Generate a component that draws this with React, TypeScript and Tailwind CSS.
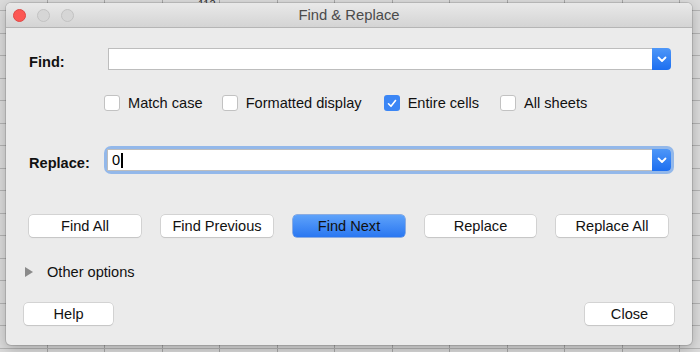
import React from "react";

const cols = [47, 104, 162, 219, 277, 334, 392, 449, 507, 564, 622, 679];
const rows = [10, 32.5, 55, 77.5, 100, 122.5, 145, 167.5, 190, 212.5, 235, 257.5, 280, 302.5, 325, 347.5];

function Sheet() {
  return (
    <svg className="absolute inset-0" width={700} height={352}>
      <rect width={700} height={352} fill="#dcdcdc" />
      {cols.map((x) => (
        <line key={"c" + x} x1={x + 0.5} y1={0} x2={x + 0.5} y2={352} stroke="#a9a9a9" />
      ))}
      {rows.map((y) => (
        <line key={"r" + y} x1={0} y1={Math.round(y) + 0.5} x2={700} y2={Math.round(y) + 0.5} stroke="#b4b4b4" />
      ))}
      <text x={198} y={8} fontSize={11} fontFamily="Liberation Sans, sans-serif" fill="#333">112</text>
    </svg>
  );
}

function Chevron() {
  return (
    <svg width={10} height={7} viewBox="0 0 10 7">
      <path d="M1.5 1.5 L5 5 L8.5 1.5" fill="none" stroke="white" strokeWidth={1.8} strokeLinecap="round" strokeLinejoin="round" />
    </svg>
  );
}

function Combo({ value, focused }: { value?: string; focused?: boolean }) {
  return (
    <div
      className={
        "flex flex-1 h-[22px] rounded-[4px] " +
        (focused ? "shadow-[0_0_0_3px_#93b8ea]" : "")
      }
    >
      <div className="flex-1 flex items-center bg-white border border-[#bdbdbd] border-r-0 pl-[4px] text-[14.6px] leading-[16px] text-black">
        {value}
        {focused && <span className="w-[1.5px] h-[15px] bg-black ml-[1px]" />}
      </div>
      <div className="w-[19px] flex items-center justify-center rounded-r-[4px] bg-[linear-gradient(#4e97f8,#1c6ef0)]">
        <Chevron />
      </div>
    </div>
  );
}

function Check({ label, checked }: { label: string; checked?: boolean }) {
  return (
    <div className="flex items-center">
      {checked ? (
        <div className="w-[16px] h-[16px] rounded-[3px] bg-[#3b86f5] flex items-center justify-center">
          <svg width={10} height={9} viewBox="0 0 10 9">
            <path d="M1.5 4.8 L4 7.3 L8.5 1.5" fill="none" stroke="white" strokeWidth={1.6} strokeLinecap="round" strokeLinejoin="round" />
          </svg>
        </div>
      ) : (
        <div className="w-[16px] h-[16px] rounded-[3px] bg-white border border-[#c2c2c2]" />
      )}
      <span className="ml-[8px] text-[14.6px] leading-[16px] text-[#111]">{label}</span>
    </div>
  );
}

function Btn({ label, primary, w = "w-[112px]" }: { label: string; primary?: boolean; w?: string }) {
  return (
    <div
      className={
        w +
        " h-[22px] rounded-[4px] flex items-center justify-center text-[14.6px] leading-[16px] text-[#111] " +
        (primary
          ? "bg-[linear-gradient(#5ea2fa,#2a77f1)] shadow-[0_0_0_0.5px_#2d6fd8]"
          : "bg-white shadow-[0_0_0_0.5px_#bcbcbc,0_1px_1px_rgba(0,0,0,0.12)]")
      }
    >
      {label}
    </div>
  );
}

export default function App() {
  return (
    <div className="relative w-[700px] h-[352px] overflow-hidden font-['Liberation_Sans',Arial,sans-serif]">
      <Sheet />
      <div className="absolute left-[6px] top-[3px] w-[686px] h-[342px] rounded-[5px] bg-[#ebebeb] shadow-[0_0_0_1px_rgba(0,0,0,0.12),0_4px_14px_rgba(0,0,0,0.25)] flex flex-col overflow-hidden">
        <div className="relative h-[25px] shrink-0 flex items-center justify-center bg-[linear-gradient(#e9e9e9,#d4d4d4)] border-b border-[#b5b5b5]">
          <div className="absolute left-[7px] top-[6px] flex gap-[11px]">
            <div className="w-[13px] h-[13px] rounded-full bg-[#fc5753] border border-[#df4744]" />
            <div className="w-[13px] h-[13px] rounded-full bg-[#d6d6d6] border border-[#c2c2c2]" />
            <div className="w-[13px] h-[13px] rounded-full bg-[#d6d6d6] border border-[#c2c2c2]" />
          </div>
          <span className="text-[14.8px] leading-[16px] text-[#4b4b4b]">Find &amp; Replace</span>
        </div>

        <div className="flex flex-col px-[23px] pr-[21px] pt-[20px]">
          <div className="flex items-center h-[22px]">
            <span className="w-[79px] text-[14.6px] leading-[16px] font-bold text-[#111] mt-[6px]">Find:</span>
            <Combo />
          </div>

          <div className="flex items-center gap-[19px] ml-[75px] mt-[25px]">
            <Check label="Match case" />
            <Check label="Formatted display" />
            <div className="ml-[3px]">
              <Check label="Entire cells" checked />
            </div>
            <div className="ml-[2px]">
              <Check label="All sheets" />
            </div>
          </div>

          <div className="flex items-center h-[22px] mt-[38px]">
            <span className="w-[78px] text-[14.6px] leading-[16px] font-bold text-[#111] mt-[5px]">Replace:</span>
            <Combo value="0" focused />
          </div>

          <div className="flex gap-[20px] mt-[44px]">
            <Btn label="Find All" />
            <Btn label="Find Previous" />
            <Btn label="Find Next" primary />
            <Btn label="Replace" w="w-[111px]" />
            <Btn label="Replace All" />
          </div>

          <div className="flex items-center mt-[27px] h-[16px]">
            <svg width={8} height={10} viewBox="0 0 8 10" className="ml-[-4px]">
              <path d="M0 0 L8 5 L0 10 Z" fill="#8a8a8a" />
            </svg>
            <span className="ml-[14px] text-[14.6px] leading-[16px] text-[#111]">Other options</span>
          </div>
        </div>

        <div className="flex justify-between px-[18px] mt-[23px]">
          <Btn label="Help" w="w-[89px]" />
          <Btn label="Close" w="w-[89px]" />
        </div>
      </div>
    </div>
  );
}
